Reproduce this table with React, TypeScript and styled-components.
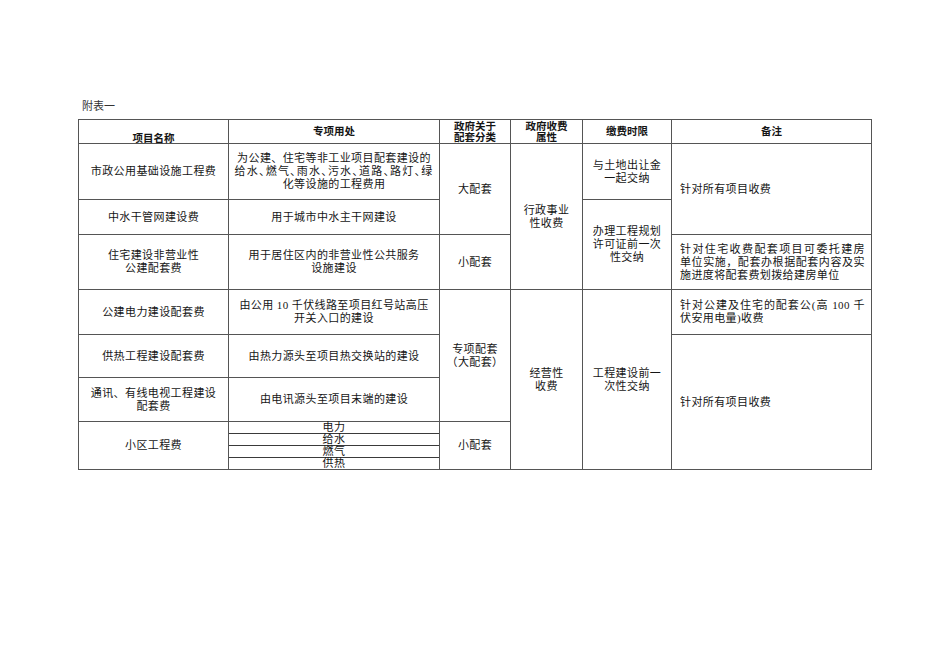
import { Fragment } from 'react';
import styled, { createGlobalStyle, css } from 'styled-components';

const GlobalStyle = createGlobalStyle`
  html, body {
    margin: 0;
    background: #fff;
  }
  body {
    font-family: "Liberation Serif", "Noto Sans CJK SC", serif;
    color: #151515;
  }
`;

const Page = styled.div`
  padding: 99px 0 0 78px;
`;

const Title = styled.div`
  font-size: 11px;
  line-height: 14px;
  padding-left: 4px;
  margin-bottom: 6px;
  color: #333;
`;

const Table = styled.table`
  border-collapse: collapse;
  table-layout: fixed;
  width: 794px;
`;

const Row = styled.tr<{ $h: number }>`
  height: ${(p) => p.$h}px;
`;

const Head = styled.th<{ $valign?: 'middle' | 'bottom' }>`
  border: 1px solid #555;
  padding: 0 4px;
  font-family: "Liberation Sans", "Noto Sans CJK SC", sans-serif;
  font-weight: 700;
  font-size: 10.5px;
  line-height: 10.5px;
  text-align: center;
  vertical-align: ${(p) => p.$valign ?? 'middle'};
`;

const Cell = styled.td<{ $align?: 'left' | 'center' }>`
  border: 1px solid #555;
  padding: ${(p) => (p.$align === 'left' ? '0 6px 0 8px' : '0 5px')};
  font-size: 11px;
  line-height: 13px;
  letter-spacing: 0.4px;
  text-align: ${(p) => p.$align ?? 'center'};
  vertical-align: middle;
`;

const SubCell = styled.td`
  border: 1px solid #555;
  padding: 0;
  vertical-align: top;
`;

const SubItem = styled.div`
  height: 12px;
  box-sizing: border-box;
  border-bottom: 1px solid #3a3a3a;
  font-size: 11px;
  line-height: 11px;
  letter-spacing: 0.4px;
  text-align: center;
  &:last-child {
    height: 11px;
    border-bottom: none;
  }
`;

const Line = styled.span<{ $justify?: boolean; $halt?: boolean }>`
  display: block;
  white-space: nowrap;
  ${(p) =>
    p.$justify &&
    css`
      white-space: normal;
      text-align: justify;
      text-align-last: justify;
    `}
  ${(p) =>
    p.$halt &&
    css`
      font-feature-settings: "halt";
      letter-spacing: 1.2px;
    `}
`;

const Lines = ({ items }: { items: string[] }) => (
  <>
    {items.map((t, i) => (
      <Fragment key={i}>
        <Line>{t}</Line>
      </Fragment>
    ))}
  </>
);

const App = () => {
  return (
    <Page>
      <GlobalStyle />
      <Title>附表一</Title>
      <Table>
        <colgroup>
          <col style={{ width: 150 }} />
          <col style={{ width: 211 }} />
          <col style={{ width: 71 }} />
          <col style={{ width: 72 }} />
          <col style={{ width: 89 }} />
          <col style={{ width: 200 }} />
        </colgroup>
        <tbody>
          <Row $h={24}>
            <Head $valign="bottom">项目名称</Head>
            <Head>专项用处</Head>
            <Head>
              <Lines items={['政府关于', '配套分类']} />
            </Head>
            <Head>
              <Lines items={['政府收费', '属性']} />
            </Head>
            <Head>缴费时限</Head>
            <Head>备注</Head>
          </Row>

          <Row $h={56}>
            <Cell>市政公用基础设施工程费</Cell>
            <Cell>
              <Line>为公建、住宅等非工业项目配套建设的</Line>
              <Line $halt>给水、燃气、雨水、污水、道路、路灯、绿</Line>
              <Line>化等设施的工程费用</Line>
            </Cell>
            <Cell rowSpan={2}>大配套</Cell>
            <Cell rowSpan={3}>
              <Lines items={['行政事业', '性收费']} />
            </Cell>
            <Cell>
              <Lines items={['与土地出让金', '一起交纳']} />
            </Cell>
            <Cell rowSpan={2} $align="left">
              针对所有项目收费
            </Cell>
          </Row>

          <Row $h={35}>
            <Cell>中水干管网建设费</Cell>
            <Cell>用于城市中水主干网建设</Cell>
            <Cell rowSpan={2}>
              <Lines items={['办理工程规划', '许可证前一次', '性交纳']} />
            </Cell>
          </Row>

          <Row $h={55}>
            <Cell>
              <Lines items={['住宅建设非营业性', '公建配套费']} />
            </Cell>
            <Cell>
              <Lines items={['用于居住区内的非营业性公共服务', '设施建设']} />
            </Cell>
            <Cell>小配套</Cell>
            <Cell $align="left">
              <Line $justify>针对住宅收费配套项目可委托建房</Line>
              <Line $justify>单位实施，配套办根据配套内容及实</Line>
              <Line>施进度将配套费划拨给建房单位</Line>
            </Cell>
          </Row>

          <Row $h={45}>
            <Cell>公建电力建设配套费</Cell>
            <Cell>
              <Lines items={['由公用 10 千伏线路至项目红号站高压', '开关入口的建设']} />
            </Cell>
            <Cell rowSpan={3}>
              <Lines items={['专项配套', '（大配套）']} />
            </Cell>
            <Cell rowSpan={4}>
              <Lines items={['经营性', '收费']} />
            </Cell>
            <Cell rowSpan={4}>
              <Lines items={['工程建设前一', '次性交纳']} />
            </Cell>
            <Cell $align="left">
              <Line $justify>针对公建及住宅的配套公(高 100 千</Line>
              <Line>伏安用电量)收费</Line>
            </Cell>
          </Row>

          <Row $h={43}>
            <Cell>供热工程建设配套费</Cell>
            <Cell>由热力源头至项目热交换站的建设</Cell>
            <Cell rowSpan={3} $align="left">
              针对所有项目收费
            </Cell>
          </Row>

          <Row $h={44}>
            <Cell>
              <Lines items={['通讯、有线电视工程建设', '配套费']} />
            </Cell>
            <Cell>由电讯源头至项目末端的建设</Cell>
          </Row>

          <Row $h={48}>
            <Cell>小区工程费</Cell>
            <SubCell>
              <SubItem>电力</SubItem>
              <SubItem>给水</SubItem>
              <SubItem>燃气</SubItem>
              <SubItem>供热</SubItem>
            </SubCell>
            <Cell>小配套</Cell>
          </Row>
        </tbody>
      </Table>
    </Page>
  );
};

export default App;
